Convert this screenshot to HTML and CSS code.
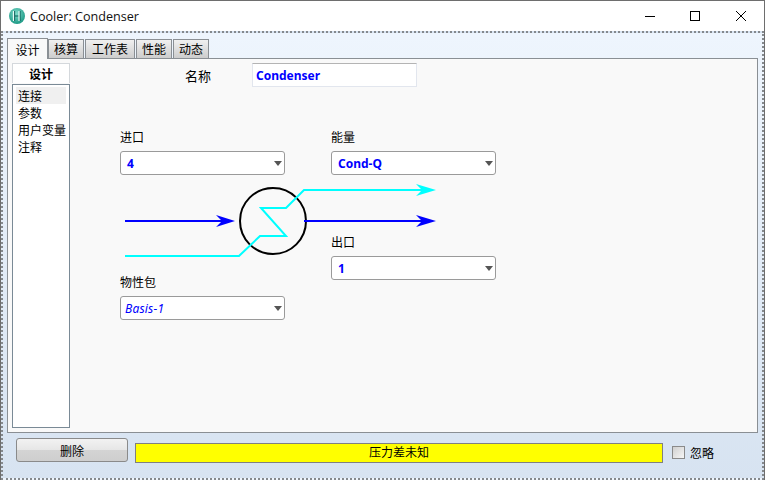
FILE: index.html
```html
<!DOCTYPE html>
<html lang="zh">
  <head>
    <meta charset="UTF-8" />
    <title>Cooler: Condenser</title>
    <link rel="stylesheet" href="styles.css">
  </head>
  <body>
    <div class="window">
      <!-- Title bar -->
      <header class="titlebar">
        <svg class="app-icon" width="16" height="16" viewBox="0 0 16 16">
          <defs>
            <radialGradient id="ball" cx="0.45" cy="0.35" r="0.7">
              <stop offset="0" stop-color="#7fdccb" />
              <stop offset="1" stop-color="#14937f" />
            </radialGradient>
          </defs>
          <circle cx="8" cy="8" r="8" fill="url(#ball)" />
          <path d="M5.5 3v10M11 3v10M5.5 8H11" stroke="#0d5f5a" stroke-width="1.2" fill="none" />
          <path d="M4.5 3v10M10 3v10" stroke="#e8fbf7" stroke-width="1.2" fill="none" />
        </svg>
        <span class="title">Cooler: Condenser</span>
        <div class="win-buttons">
          <svg width="12" height="12" viewBox="0 0 12 12"><path d="M1 6.5h10" stroke="#000" fill="none" /></svg>
          <svg width="12" height="12" viewBox="0 0 12 12"><rect x="1.5" y="1.5" width="9" height="9" stroke="#000" fill="none" /></svg>
          <svg class="close" width="12" height="12" viewBox="0 0 12 12"><path d="M1 1l10 10M11 1L1 11" stroke="#000" fill="none" /></svg>
        </div>
      </header>

      <div class="client">
        <!-- Tabs -->
        <ul class="tabs">
          <li class="tab active">设计</li>
          <li class="tab">核算</li>
          <li class="tab wide">工作表</li>
          <li class="tab">性能</li>
          <li class="tab">动态</li>
        </ul>

        <section class="panel">
          <!-- Side navigation -->
          <aside class="side">
            <div class="side-head">设计</div>
            <ul class="side-list">
              <li class="selected">连接</li>
              <li>参数</li>
              <li>用户变量</li>
              <li>注释</li>
            </ul>
          </aside>

          <div class="form">
            <div class="name-row">
              <label class="name-label">名称</label>
              <div class="name-input">Condenser</div>
            </div>

            <div class="ports">
              <div class="port port-in">
                <label>进口</label>
                <div class="combo"><span>4</span><i class="caret"></i></div>
              </div>
              <div class="port port-energy">
                <label>能量</label>
                <div class="combo"><span>Cond-Q</span><i class="caret"></i></div>
              </div>
              <div class="port port-out">
                <label>出口</label>
                <div class="combo"><span>1</span><i class="caret"></i></div>
              </div>
              <div class="port port-basis">
                <label>物性包</label>
                <div class="combo basis"><span>Basis-1</span><i class="caret"></i></div>
              </div>

              <!-- Flowsheet symbol -->
              <svg class="diagram" width="330" height="90" viewBox="120 180 330 90">
                <g fill="none" stroke-width="2">
                  <circle cx="273" cy="221" r="33" stroke="#000" />
                  <path d="M125 256H239L260 236H286L261 208H286L304 190H422" stroke="#00ffff" />
                  <path d="M125 221H222M304 221H422" stroke="#0000ff" />
                </g>
                <path d="M436 190L416 184L422 190L416 196Z" fill="#00ffff" />
                <path d="M436 221L416 215L422 221L416 227Z" fill="#0000ff" />
                <path d="M235 221L216 215L222 221L216 227Z" fill="#0000ff" />
              </svg>
            </div>
          </div>
        </section>

        <!-- Status row -->
        <footer class="statusbar">
          <button class="delete">删除</button>
          <div class="status">压力差未知</div>
          <label class="ignore"><i class="check"></i>忽略</label>
        </footer>
      </div>
    </div>
  </body>
</html>
```

FILE: styles.css
```css
* {
  margin: 0;
  padding: 0;
  box-sizing: border-box;
}
:root {
  --border: #8a8f94;
}
body {
  width: 765px;
  height: 480px;
  overflow: hidden;
  font-family: "Noto Sans CJK SC", sans-serif;
  font-size: 12px;
  color: #000;
  background: #fff;
}
ul {
  list-style: none;
}

/* Window */
.window {
  width: 765px;
  height: 480px;
  display: flex;
  flex-direction: column;
  border: 1px solid #6e6e6e;
  border-bottom: 0;
}
.titlebar {
  height: 30px;
  flex: none;
  display: flex;
  align-items: center;
  padding-left: 8px;
  background: #fff;
}
.app-icon {
  margin-right: 5px;
}
.title {
  font-family: "Open Sans", sans-serif;
  font-size: 12.6px;
  color: #111;
}
.win-buttons {
  margin-left: auto;
  margin-right: 17px;
  display: flex;
  gap: 33px;
}
.win-buttons .close {
  margin-left: 1px;
}

/* Client area */
.client {
  flex: 1;
  display: flex;
  flex-direction: column;
  padding: 5px 4px 0 4px;
  border: 2px dotted #85898d;
  background: linear-gradient(#eef5fd, #d7e3f1);
}
.tabs {
  display: flex;
  height: 20px;
  align-items: flex-end;
}
.tab {
  width: 36px;
  height: 19px;
  line-height: 18px;
  margin-right: 1px;
  text-align: center;
  border: 1px solid var(--border);
  border-bottom: 0;
  background: linear-gradient(#f0f0f0, #cdcdcd);
}
.tab.wide {
  width: 50px;
}
.tab.active {
  height: 21px;
  line-height: 21px;
  width: 41px;
  margin-right: 0;
  margin-bottom: -1px;
  background: #f9f9f9;
  position: relative;
  z-index: 1;
}
.panel {
  height: 375px;
  display: flex;
  border: 1px solid var(--border);
  background: #f9f9f9;
  padding: 4px 0 0 4px;
}

/* Side navigation */
.side {
  width: 58px;
  flex: none;
  display: flex;
  flex-direction: column;
  height: 365px;
}
.side-head {
  height: 20px;
  line-height: 20px;
  text-align: center;
  font-weight: 700;
  background: #fff;
  border: 1px solid #d4d8dc;
  border-bottom: 0;
}
.side-list {
  flex: 1;
  background: #fff;
  border: 1px solid #7a8a96;
  padding: 2px 3px;
  margin-top: 1px;
}
.side-list li {
  height: 17px;
  line-height: 17px;
  padding-left: 2px;
  white-space: nowrap;
}
.side-list .selected {
  background: #f0f0f0;
}

/* Form */
.form {
  flex: 1;
}
.name-row {
  display: flex;
  align-items: center;
  height: 24px;
}
.name-label {
  margin-left: 115px;
  width: 67px;
  font-size: 13px;
}
.name-input {
  width: 165px;
  height: 24px;
  line-height: 23px;
  padding-left: 3px;
  background: #fff;
  border: 1px solid #e2e6ee;
  border-top-color: #b4b4b4;
  font-family: "Noto Sans", sans-serif;
  font-weight: 700;
  font-size: 12px;
  color: #0000ff;
}
.ports {
  position: relative;
  height: 257px;
  margin-left: 50px;
  margin-top: 40px;
  display: grid;
  grid-template-columns: 165px 165px;
  column-gap: 46px;
  grid-template-rows: 105px 1fr;
}
.port label {
  display: block;
  height: 24px;
  line-height: 20px;
}
.port-energy {
  grid-column: 2;
  grid-row: 1;
}
.port-in {
  grid-column: 1;
  grid-row: 1;
}
.port-out {
  grid-column: 2;
  grid-row: 2;
}
.port-basis {
  grid-column: 1;
  grid-row: 2;
  margin-top: 40px;
}
.combo {
  height: 24px;
  display: flex;
  align-items: center;
  justify-content: space-between;
  padding: 0 2px 0 6px;
  background: #fff;
  border: 1px solid #9a9a9a;
  border-radius: 3px;
  font-family: "Noto Sans", sans-serif;
  font-weight: 700;
  color: #0000ff;
}
.combo.basis {
  font-weight: 400;
  font-style: italic;
  letter-spacing: 0.2px;
  padding-left: 4px;
}
.caret {
  width: 0;
  height: 0;
  border: 4px solid transparent;
  border-top: 5px solid #555;
  border-bottom: 0;
}
.diagram {
  position: absolute;
  left: 0;
  top: 53px;
}

/* Status row */
.statusbar {
  flex: 1;
  display: flex;
  align-items: flex-start;
  padding: 5px 0 0 9px;
}
.delete {
  width: 112px;
  height: 24px;
  font-family: inherit;
  font-size: 12px;
  border: 1px solid #8a8a8a;
  border-radius: 3px;
  background: linear-gradient(#f2f2f2, #e6e6e6 50%, #d4d4d4 50%, #cecece);
}
.status {
  width: 528px;
  height: 20px;
  margin: 5px 0 0 7px;
  line-height: 16px;
  text-align: center;
  background: #ffff00;
  border: 1px solid #808080;
}
.ignore {
  display: flex;
  align-items: center;
  margin: 5px 0 0 9px;
  height: 18px;
}
.check {
  width: 13px;
  height: 13px;
  margin-right: 5px;
  border: 1px solid #8a8a8a;
  background: linear-gradient(135deg, #d0d0d0, #f6f6f6);
}
```
